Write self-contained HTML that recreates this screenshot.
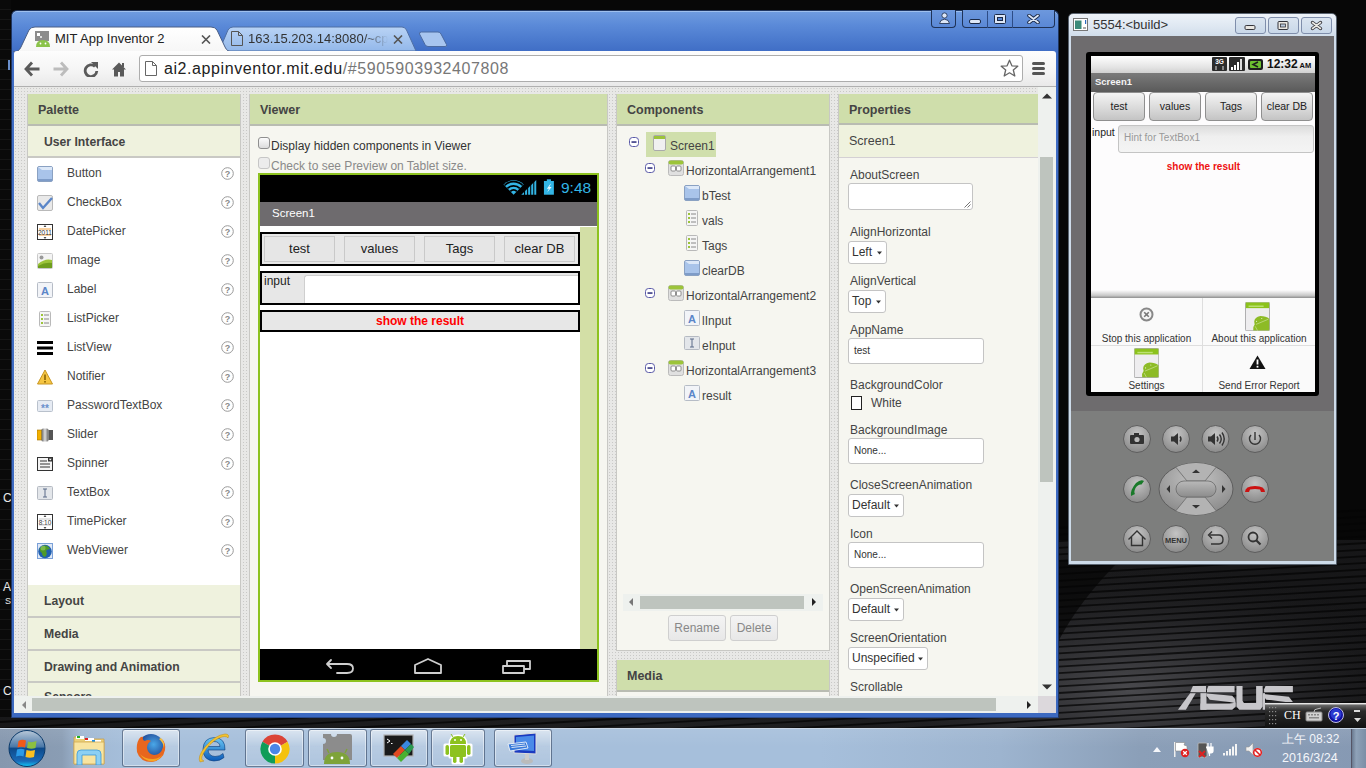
<!DOCTYPE html>
<html><head><meta charset="utf-8">
<style>
*{margin:0;padding:0;box-sizing:border-box}
html,body{width:1366px;height:768px;overflow:hidden}
body{position:relative;background:#0a0a0a;font-family:"Liberation Sans",sans-serif;font-size:13px;color:#333}
.a{position:absolute}
.tb{background:linear-gradient(180deg,#6d98dd,#5a88d6);border:1px solid #1f3358;border-top:none}
.dots{background-color:#e8e8e6;background-image:radial-gradient(circle,#c9c9c7 0.7px,transparent 0.9px);background-size:3px 3px}
.hdr{background:#cfdeab;border-bottom:2px solid #b9bcb2;font-weight:bold;font-size:12.5px;color:#444;padding-left:10px}
.sub{background:#eff2de;border-bottom:2px solid #c9c9c4;font-weight:bold;font-size:12.2px;color:#444}

.pbtn{background:#e6e6e6;border:1px solid #c9c9c9;font-size:13px;line-height:24px;text-align:center;color:#222}
.gbtn{background:linear-gradient(#f4f4f4,#e8e8e8);border:1px solid #cfcfcf;border-radius:3px;font-size:12px;line-height:24px;text-align:center;color:#888}
</style>
<style>
.ebtn{background:linear-gradient(180deg,#dbe5f0,#c9d8e9);border:1px solid #7f8eab;border-radius:3px}
.emb{background:linear-gradient(180deg,#f4f4f4,#d8d8d8 60%,#c4c4c4);border:1px solid #8f8f8f;border-radius:4px;font-size:10.5px;line-height:27px;text-align:center;color:#222}
.etx{font-size:10px;line-height:12px;text-align:center;color:#333;white-space:nowrap}
</style>
<style>
.tbtn{border:1px solid rgba(60,80,110,0.7);border-radius:3px;background:linear-gradient(180deg,rgba(255,255,255,0.55),rgba(255,255,255,0.2) 45%,rgba(255,255,255,0.1));box-shadow:inset 0 0 0 1px rgba(255,255,255,0.45)}
</style>
</head><body>
<div class="a" style="left:0;top:0;width:1366px;height:728px;background:#070707"></div>
<svg class="a" style="left:0;top:0" width="1366" height="728" viewBox="0 0 1366 728">
 <defs>
  <radialGradient id="dg" cx="1130" cy="690" r="300" gradientUnits="userSpaceOnUse" gradientTransform="translate(1130 690) scale(1 0.42) translate(-1130 -690)">
   <stop offset="0" stop-color="#4a4a4e"/><stop offset="0.5" stop-color="#2c2c2f" stop-opacity="0.8"/><stop offset="1" stop-color="#1a1a1c" stop-opacity="0"/>
  </radialGradient>
  <linearGradient id="dg2" x1="0" y1="0" x2="1" y2="0"><stop offset="0" stop-color="#1c1c1e"/><stop offset="0.5" stop-color="#262628"/><stop offset="1" stop-color="#1a1a1c"/></linearGradient>
 </defs>
 <rect x="0" y="540" width="1366" height="188" fill="url(#dg2)" opacity="0.8"/>
 <rect x="800" y="480" width="566" height="248" fill="url(#dg)"/>
 <path d="M1059 560 L1120 560 Q1080 600 1059 640 Z" fill="#060606" opacity="0.7"/>
 <g fill="none" stroke="#050505" stroke-width="1.8" opacity="0.75">
<path d="M0 590.0 Q700 550.0 1366 510.0"/>
<path d="M0 596.6 Q700 556.6 1366 516.6"/>
<path d="M0 603.2 Q700 563.2 1366 523.2"/>
<path d="M0 609.8 Q700 569.8 1366 529.8"/>
<path d="M0 616.4 Q700 576.4 1366 536.4"/>
<path d="M0 623.0 Q700 583.0 1366 543.0"/>
<path d="M0 629.6 Q700 589.6 1366 549.6"/>
<path d="M0 636.2 Q700 596.2 1366 556.2"/>
<path d="M0 642.8 Q700 602.8 1366 562.8"/>
<path d="M0 649.4 Q700 609.4 1366 569.4"/>
<path d="M0 656.0 Q700 616.0 1366 576.0"/>
<path d="M0 662.6 Q700 622.6 1366 582.6"/>
<path d="M0 669.2 Q700 629.2 1366 589.2"/>
<path d="M0 675.8 Q700 635.8 1366 595.8"/>
<path d="M0 682.4 Q700 642.4 1366 602.4"/>
<path d="M0 689.0 Q700 649.0 1366 609.0"/>
<path d="M0 695.6 Q700 655.6 1366 615.6"/>
<path d="M0 702.2 Q700 662.2 1366 622.2"/>
<path d="M0 708.8 Q700 668.8 1366 628.8"/>
<path d="M0 715.4 Q700 675.4 1366 635.4"/>
<path d="M0 722.0 Q700 682.0 1366 642.0"/>
<path d="M0 728.6 Q700 688.6 1366 648.6"/>
<path d="M0 735.2 Q700 695.2 1366 655.2"/>
<path d="M0 741.8 Q700 701.8 1366 661.8"/>
<path d="M0 748.4 Q700 708.4 1366 668.4"/>
<path d="M0 755.0 Q700 715.0 1366 675.0"/>
<path d="M0 761.6 Q700 721.6 1366 681.6"/>
<path d="M0 768.2 Q700 728.2 1366 688.2"/>
<path d="M0 774.8 Q700 734.8 1366 694.8"/>
<path d="M0 781.4 Q700 741.4 1366 701.4"/>
<path d="M0 788.0 Q700 748.0 1366 708.0"/>
<path d="M0 794.6 Q700 754.6 1366 714.6"/>
<path d="M0 801.2 Q700 761.2 1366 721.2"/>
<path d="M0 807.8 Q700 767.8 1366 727.8"/>
<path d="M0 814.4 Q700 774.4 1366 734.4"/>
<path d="M0 821.0 Q700 781.0 1366 741.0"/>
<path d="M0 827.6 Q700 787.6 1366 747.6"/>
<path d="M0 834.2 Q700 794.2 1366 754.2"/>
<path d="M0 840.8 Q700 800.8 1366 760.8"/>
<path d="M0 847.4 Q700 807.4 1366 767.4"/>
 </g>
</svg>
<div class="a" style="left:0;top:0;width:11px;height:717px;background:repeating-linear-gradient(180deg,#0a0a0a 0,#0a0a0a 9px,#161616 9px,#161616 10px)"></div>
<div class="a" style="left:3px;top:491px;font-size:12px;color:#e8e8e8;line-height:14px">C</div>
<div class="a" style="left:3px;top:580px;font-size:12px;color:#e8e8e8;line-height:14px">A</div>
<div class="a" style="left:5px;top:596px;font-size:9px;color:#e8e8e8;line-height:11px">S</div>
<div class="a" style="left:3px;top:684px;font-size:12px;color:#e8e8e8;line-height:14px">C</div>
<div class="a" style="left:8px;top:60px;width:2px;height:10px;background:#6a8fcc"></div>
<!-- ASUS logo -->
<svg class="a" style="left:1176px;top:684px" width="124" height="28" viewBox="0 0 2646 598">
 <g fill="#c7c6ca">
  <path d="M40 550 L210 550 L420 195 L300 195 Z"/>
  <path d="M300 175 L360 45 L640 45 L640 175 Z"/>
  <path d="M660 175 L660 120 L690 45 L1250 45 L1250 175 Z"/>
  <path d="M520 195 L650 195 L650 550 L520 550 Z"/>
  <path d="M650 205 L1200 250 L1260 320 L1275 410 L1140 385 L720 335 L650 250 Z"/>
  <path d="M520 415 L1140 415 L1275 400 L1275 480 L1200 550 L520 550 Z"/>
  <path d="M1290 45 L1420 45 L1420 360 L1450 405 L1710 405 L1710 45 L1850 45 L1850 480 L1800 550 L1350 550 L1290 480 Z"/>
  <path d="M1880 175 L1880 110 L1910 45 L2495 45 L2495 175 Z"/>
  <path d="M1870 215 L2410 270 L2495 385 L2340 385 L1930 335 L1875 270 Z"/>
  <path d="M1850 195 L1900 195 L1900 550 L1850 550 Z"/>
 </g>
</svg>
<!-- language bar -->
<div class="a" style="left:1265px;top:703px;width:101px;height:25px;background:linear-gradient(180deg,#f4f4f4 0,#d8d8d8 1px,#6a6a6a 2px,#2a2a2a 8px,#111 100%)"></div>
<svg class="a" style="left:1268px;top:706px" width="10" height="20" viewBox="0 0 10 20"><g fill="#8a8a8a"><rect x="1" y="1" width="1.2" height="1.2"/><rect x="4" y="1" width="1.2" height="1.2"/><rect x="7" y="1" width="1.2" height="1.2"/><rect x="1" y="5" width="1.2" height="1.2"/><rect x="4" y="5" width="1.2" height="1.2"/><rect x="7" y="5" width="1.2" height="1.2"/><rect x="1" y="9" width="1.2" height="1.2"/><rect x="4" y="9" width="1.2" height="1.2"/><rect x="7" y="9" width="1.2" height="1.2"/><rect x="1" y="13" width="1.2" height="1.2"/><rect x="4" y="13" width="1.2" height="1.2"/><rect x="7" y="13" width="1.2" height="1.2"/><rect x="1" y="17" width="1.2" height="1.2"/><rect x="4" y="17" width="1.2" height="1.2"/><rect x="7" y="17" width="1.2" height="1.2"/></g></svg>
<div class="a" style="left:1284px;top:708px;font-family:'Liberation Serif',serif;font-size:12px;line-height:14px;color:#fff">CH</div>
<svg class="a" style="left:1305px;top:707px" width="18" height="15" viewBox="0 0 18 15"><rect x="1" y="5" width="16" height="9" rx="1" fill="#d0d0d0" stroke="#888"/><g fill="#888"><rect x="3" y="7" width="2" height="1.5"/><rect x="6" y="7" width="2" height="1.5"/><rect x="9" y="7" width="2" height="1.5"/><rect x="12" y="7" width="2" height="1.5"/><rect x="4" y="10" width="10" height="1.5"/></g><path d="M9 5 Q9 2 12 2 L16 1" fill="none" stroke="#bbb"/></svg>
<svg class="a" style="left:1328px;top:707px" width="16" height="16" viewBox="0 0 16 16"><circle cx="8" cy="8" r="7.5" fill="#1010a0" stroke="#c0c0e0" stroke-width="1"/><circle cx="8" cy="7" r="5.5" fill="#2a3ad0"/><text x="8" y="12.5" font-size="11" font-weight="bold" text-anchor="middle" fill="#fff" font-family="Liberation Sans">?</text></svg>
<div class="a" style="left:1354px;top:710px;width:6px;height:2px;background:#ddd"></div>
<svg class="a" style="left:1354px;top:718px" width="7" height="4" viewBox="0 0 7 4"><path d="M0 0 L7 0 L3.5 4 Z" fill="#ddd"/></svg>
<!-- chrome window frame -->
<div class="a" style="left:11px;top:10px;width:1048px;height:708px;background:linear-gradient(180deg,#709ce0 0px,#5b8ad8 14px,#4a79cd 30px,#3f6dc5 41px,#3c69c0 100%);border:1px solid #1f3560;border-bottom-color:#2a4a8a;border-radius:6px 6px 0 0;box-shadow:inset 0 1px 0 #9fc0ee"></div>
<!-- title buttons -->
<div class="a tb" style="left:931px;top:10px;width:25px;height:18px;border-radius:0 0 4px 4px"><svg width="25" height="18" viewBox="0 0 25 18"><circle cx="12.5" cy="5.5" r="2.6" fill="#dde7f7" stroke="#1b2a48" stroke-width="0.8"/><path d="M7.5 13.5 Q8 9.5 12.5 9.2 Q17 9.5 17.5 13.5 Z" fill="#dde7f7" stroke="#1b2a48" stroke-width="0.8"/></svg></div>
<div class="a tb" style="left:962px;top:10px;width:93px;height:18px;border-radius:0 0 4px 4px"></div>
<div class="a" style="left:987px;top:11px;width:1px;height:17px;background:#2d4c86"></div>
<div class="a" style="left:1012px;top:11px;width:1px;height:17px;background:#2d4c86"></div>
<div class="a" style="left:969px;top:19px;width:12px;height:5px;background:#dde7f7;border:1px solid #1b2a48;border-radius:2px"></div>
<svg class="a" style="left:994px;top:14px" width="12" height="10" viewBox="0 0 12 10"><rect x="0.5" y="0.5" width="11" height="9" rx="1" fill="#dde7f7" stroke="#1b2a48"/><rect x="3.5" y="3.5" width="5" height="3" fill="#5a88d6" stroke="#1b2a48"/></svg>
<svg class="a" style="left:1027px;top:14px" width="13" height="10" viewBox="0 0 13 10"><path d="M2 1.5 L11 8.5 M11 1.5 L2 8.5" stroke="#1b2a48" stroke-width="3.6" stroke-linecap="round"/><path d="M2 1.5 L11 8.5 M11 1.5 L2 8.5" stroke="#dde7f7" stroke-width="1.8" stroke-linecap="round"/></svg>
<!-- tabs -->
<svg class="a" style="left:11px;top:25px" width="440" height="27" viewBox="0 0 440 27">
 <defs>
  <linearGradient id="tg2" x1="0" y1="0" x2="0" y2="1"><stop offset="0" stop-color="#b9d3f5"/><stop offset="1" stop-color="#93b8ea"/></linearGradient>
  <linearGradient id="tg1" x1="0" y1="0" x2="0" y2="1"><stop offset="0" stop-color="#ffffff"/><stop offset="1" stop-color="#f6f6f6"/></linearGradient>
 </defs>
 <path d="M208 26 L217 5 Q218.5 2 222 2 L391 2 Q394 2 395.5 5 L405 26 Z" fill="url(#tg2)" stroke="#4f6fa4" stroke-width="1"/>
 <path d="M408.5 9 Q408 7 410.5 7 L427 7 Q429 7 430 9 L435.5 19.5 Q436.5 21.5 434 21.5 L417 21.5 Q415 21.5 414 19.5 Z" fill="#a7c5ef" stroke="#4b6aa0" stroke-width="1"/>
 <path d="M2 27 Q8 27 10 22 L18 5 Q20 2 24 2 L200 2 Q204 2 206 5 L214 22 Q216 27 222 27 Z" fill="url(#tg1)" stroke="#4a5f86" stroke-width="1"/>
</svg>
<!-- favicon -->
<svg class="a" style="left:35px;top:31px" width="16" height="16" viewBox="0 0 16 16"><rect x="0" y="0" width="14" height="10" fill="#8c8c8c"/><rect x="2" y="2" width="3" height="3" fill="#fff"/><rect x="5" y="5" width="2" height="2" fill="#ddd"/><path d="M1 16 Q1 9 8 9 Q15 9 15 16 Z" fill="#8bc34a"/><circle cx="5.5" cy="12.5" r="0.9" fill="#fff"/><circle cx="10.5" cy="12.5" r="0.9" fill="#fff"/></svg>
<div class="a" style="left:55px;top:30px;font-size:13px;color:#222;line-height:17px;white-space:nowrap">MIT App Inventor 2</div>
<svg class="a" style="left:201px;top:35px" width="10" height="9" viewBox="0 0 10 9"><path d="M1 0.5 L9 8.5 M9 0.5 L1 8.5" stroke="#555" stroke-width="1.6"/></svg>
<svg class="a" style="left:231px;top:31px" width="12" height="15" viewBox="0 0 12 15"><path d="M0.5 0.5 L7.5 0.5 L11.5 4.5 L11.5 14.5 L0.5 14.5 Z M7.5 0.5 L7.5 4.5 L11.5 4.5" fill="none" stroke="#555" stroke-width="1"/></svg>
<div class="a" style="left:248px;top:30px;width:140px;overflow:hidden;font-size:13px;color:#333;line-height:17px;white-space:nowrap;-webkit-mask-image:linear-gradient(90deg,#000 82%,transparent)">163.15.203.14:8080/~cpt</div>
<svg class="a" style="left:393px;top:35px" width="10" height="9" viewBox="0 0 10 9"><path d="M1 0.5 L9 8.5 M9 0.5 L1 8.5" stroke="#555" stroke-width="1.6"/></svg>
<!-- toolbar -->
<div class="a" style="left:14px;top:51px;width:1042px;height:36px;background:linear-gradient(180deg,#fdfdfd 0,#f4f4f4 60%,#e9e9e9 100%);border-radius:3px 3px 0 0;border-bottom:1px solid #a8a8a8"></div>
<svg class="a" style="left:24px;top:61px" width="110" height="16" viewBox="0 0 110 16">
 <path d="M8 1.5 L2 8 L8 14.5 M2.5 8 L15.5 8" fill="none" stroke="#5a5a5a" stroke-width="2.8" stroke-linejoin="miter"/>
 <path d="M37 1.5 L43 8 L37 14.5 M42.5 8 L29.5 8" fill="none" stroke="#bcbcbc" stroke-width="2.8"/>
 <path d="M71 5.5 A5.8 5.8 0 1 0 72.8 10" fill="none" stroke="#5a5a5a" stroke-width="2.8"/><path d="M67 1 L74 1 L74 8 Z" fill="#5a5a5a"/>
 <path d="M88 8.5 L95 1.5 L102 8.5 L100 8.5 L100 15.5 L90 15.5 L90 8.5 Z" fill="#5a5a5a"/><rect x="98" y="2" width="2" height="4" fill="#5a5a5a"/><rect x="94" y="11" width="2" height="5" fill="#f4f4f4"/>
</svg>
<div class="a" style="left:139px;top:55px;width:884px;height:27px;background:#fff;border:1px solid #adadad;border-radius:3px"></div>
<svg class="a" style="left:145px;top:61px" width="12" height="15" viewBox="0 0 12 15"><path d="M0.5 0.5 L7.5 0.5 L11.5 4.5 L11.5 14.5 L0.5 14.5 Z M7.5 0.5 L7.5 4.5 L11.5 4.5" fill="#fff" stroke="#666" stroke-width="1"/></svg>
<div class="a" style="left:164px;top:59px;font-size:16px;line-height:19px;letter-spacing:0.58px;color:#222;white-space:nowrap">ai2.appinventor.mit.edu<span style="color:#777">/#5905903932407808</span></div>
<svg class="a" style="left:1000px;top:59px" width="19" height="19" viewBox="0 0 19 19"><path d="M9.5 1.2 L11.9 6.8 L17.8 7.2 L13.3 11 L14.8 17 L9.5 13.8 L4.2 17 L5.7 11 L1.2 7.2 L7.1 6.8 Z" fill="#fff" stroke="#666" stroke-width="1.3" stroke-linejoin="round"/></svg>
<div class="a" style="left:1032px;top:62px;width:13px;height:3px;background:#555;border-radius:2px"></div>
<div class="a" style="left:1032px;top:67px;width:13px;height:3px;background:#555;border-radius:2px"></div>
<div class="a" style="left:1032px;top:72px;width:13px;height:3px;background:#555;border-radius:2px"></div>
<!-- page bg -->
<div class="a dots" style="left:14px;top:87px;width:1024px;height:609px"></div>
<div class="a" style="left:14px;top:86px;width:1042px;height:1px;background:#b0b0b0"></div>
<!-- PALETTE -->
<div class="a" style="left:27px;top:94px;width:214px;height:602px;background:#eff2de;border-left:1px solid #c8c8c4;border-right:1px solid #c8c8c4"></div>
<div class="a hdr" style="left:28px;top:94px;width:212px;height:32px;line-height:32px">Palette</div>
<div class="a sub" style="left:28px;top:126px;width:212px;height:32px;line-height:32px;padding-left:16px">User Interface</div>
<div class="a" style="left:28px;top:158px;width:212px;height:427px;background:#fff"></div>
<div id="plist" class="a" style="left:28px;top:158px;width:212px;height:427px"></div>
<div class="a sub" style="left:28px;top:585px;width:212px;height:33px;line-height:33px;padding-left:16px">Layout</div>
<div class="a sub" style="left:28px;top:618px;width:212px;height:33px;line-height:33px;padding-left:16px">Media</div>
<div class="a sub" style="left:28px;top:651px;width:212px;height:32px;line-height:32px;padding-left:16px">Drawing and Animation</div>
<div class="a sub" style="left:28px;top:683px;width:212px;height:13px;line-height:28px;padding-left:16px;border:none;overflow:hidden">Sensors</div>
<!-- VIEWER -->
<div class="a" style="left:249px;top:94px;width:359px;height:602px;background:#f6f6f0;border-left:1px solid #c8c8c4;border-right:1px solid #c8c8c4"></div>
<div class="a hdr" style="left:250px;top:94px;width:357px;height:32px;line-height:32px">Viewer</div>
<div class="a" style="left:258px;top:137px;width:12px;height:12px;border:1px solid #8f8f8f;border-radius:3px;background:linear-gradient(#fcfcfc,#dcdcdc)"></div>
<div class="a" style="left:271px;top:139px;font-size:12px;line-height:15px;color:#333;white-space:nowrap">Display hidden components in Viewer</div>
<div class="a" style="left:258px;top:157px;width:12px;height:12px;border:1px solid #c6c6c6;border-radius:3px;background:#ececec"></div>
<div class="a" style="left:271px;top:159px;font-size:12px;line-height:15px;color:#8a8a8a;white-space:nowrap">Check to see Preview on Tablet size.</div>
<!-- phone mock -->
<div class="a" style="left:258px;top:173px;width:341px;height:509px;background:#fff;border:2px solid #8dc21f"></div>
<div class="a" style="left:260px;top:175px;width:337px;height:27px;background:#000"></div>
<svg class="a" style="left:500px;top:176px" width="100" height="22" viewBox="0 0 1366 301">
 <path d="M185 255 L47 117 A195 195 0 0 1 323 117 Z" fill="#33b5e5"/>
 <g fill="none" stroke="#000" stroke-width="24">
  <path d="M60 130 A177 177 0 0 1 310 130"/>
  <path d="M100 170 A120 120 0 0 1 270 170"/>
  <path d="M140 210 A64 64 0 0 1 230 210"/>
 </g>
 <path d="M290 255 L495 55 L495 255 Z" fill="#33b5e5"/>
 <g fill="#000"><rect x="328" y="40" width="14" height="220"/><rect x="370" y="40" width="14" height="220"/><rect x="412" y="40" width="14" height="220"/><rect x="454" y="40" width="14" height="220"/></g>
 <rect x="600" y="68" width="136" height="188" fill="#33b5e5"/><rect x="640" y="45" width="56" height="25" fill="#33b5e5"/>
 <path d="M690 105 L640 175 L668 175 L645 225 L705 150 L675 150 L695 105 Z" fill="#e8f6fc"/>
</svg>
<div class="a" style="left:561px;top:179px;font-size:15.5px;line-height:17px;color:#33b5e5;white-space:nowrap">9:48</div>
<div class="a" style="left:260px;top:202px;width:337px;height:24px;background:#6e6b6e"></div>
<div class="a" style="left:272px;top:205px;font-size:11.5px;font-weight:normal;line-height:16px;color:#fff;white-space:nowrap">Screen1</div>
<div class="a" style="left:580px;top:227px;width:17px;height:422px;background:#d3dfa6"></div>
<!-- HA1 -->
<div class="a" style="left:260px;top:232px;width:320px;height:34px;background:#e7e7e7;border:2px solid #000"></div>
<div class="a pbtn" style="left:264px;top:236px;width:71px;height:26px">test</div>
<div class="a pbtn" style="left:344px;top:236px;width:71px;height:26px">values</div>
<div class="a pbtn" style="left:424px;top:236px;width:71px;height:26px">Tags</div>
<div class="a pbtn" style="left:504px;top:236px;width:71px;height:26px">clear DB</div>
<!-- HA2 -->
<div class="a" style="left:260px;top:271px;width:320px;height:34px;background:#e7e7e7;border:2px solid #000"></div>
<div class="a" style="left:264px;top:274px;font-size:12px;line-height:15px;color:#222">input</div>
<div class="a" style="left:304px;top:275px;width:274px;height:28px;background:#fff;border-left:1px solid #cfcfcf;border-top:1px solid #cfcfcf;border-radius:3px 0 0 0"></div>
<!-- HA3 -->
<div class="a" style="left:260px;top:310px;width:320px;height:22px;background:#e7e7e7;border:2px solid #000"></div>
<div class="a" style="left:262px;top:312px;width:316px;height:18px;line-height:18px;text-align:center;font-size:12px;font-weight:bold;color:#ff0000">show the result</div>
<div class="a" style="left:260px;top:649px;width:337px;height:31px;background:#000"></div>
<svg class="a" style="left:325px;top:657px" width="210" height="18" viewBox="0 0 210 18">
 <path d="M6 3 L2 7 L6 11 M2.5 7 L22 7 Q28 7 28 11.5 Q28 16 22 16 L12 16" fill="none" stroke="#cfcfcf" stroke-width="1.8" stroke-linecap="round" stroke-linejoin="round"/>
 <path d="M90 8 L103 2 L116 8 L116 16 L90 16 Z" fill="none" stroke="#cfcfcf" stroke-width="1.8" stroke-linejoin="round"/>
 <path d="M178 9 L178 16 L199 16 L199 9 Z M182 8 L182 4 L205 4 L205 12 L199 12" fill="none" stroke="#cfcfcf" stroke-width="1.8" stroke-linejoin="round"/>
</svg>
<!-- COMPONENTS -->
<div class="a" style="left:616px;top:94px;width:214px;height:557px;background:#f6f6f0;border:1px solid #c8c8c4;border-top:none"></div>
<div class="a hdr" style="left:617px;top:94px;width:212px;height:32px;line-height:32px">Components</div>
<div id="ctree"></div>
<!-- comp horizontal scrollbar -->
<div class="a" style="left:623px;top:594px;width:200px;height:17px;background:#eef1ee"></div>
<div class="a" style="left:640px;top:596px;width:164px;height:13px;background:#bec4be"></div>
<svg class="a" style="left:627px;top:597px" width="195" height="10" viewBox="0 0 195 10"><path d="M6 1 L2 5 L6 9 Z" fill="#777"/><path d="M185 1 L189 5 L185 9 Z" fill="#222"/></svg>
<div class="a gbtn" style="left:668px;top:615px;width:58px;height:26px">Rename</div>
<div class="a gbtn" style="left:730px;top:615px;width:48px;height:26px">Delete</div>
<div class="a" style="left:616px;top:660px;width:214px;height:36px;background:#f6f6f0;border-left:1px solid #c8c8c4;border-right:1px solid #c8c8c4"></div>
<div class="a hdr" style="left:617px;top:660px;width:212px;height:32px;line-height:32px">Media</div>
<!-- PROPERTIES -->
<div class="a" style="left:838px;top:94px;width:201px;height:602px;background:#f6f6f0;border-left:1px solid #c8c8c4"></div>
<div class="a hdr" style="left:839px;top:94px;width:199px;height:31px;line-height:32px">Properties</div>
<div class="a" style="left:839px;top:125px;width:199px;height:33px;background:#eff2de;border-bottom:1px solid #d4d0d4;font-size:12.5px;color:#444;padding-left:10px;line-height:32px">Screen1</div>
<div id="props"></div>
<svg class="a" style="left:37px;top:166px" width="16" height="16" viewBox="0 0 16 16"><rect x="0.5" y="0.5" width="15" height="15" rx="1.5" fill="#a9c4ea" stroke="#8aa1c2"/><path d="M1 1 L15 1 L15 4 L5 4 Z" fill="#dce8f8"/><rect x="1" y="13" width="14" height="2" fill="#7e9cc8"/></svg>
<div class="a" style="left:67px;top:166px;font-size:12px;line-height:15px;color:#444;white-space:nowrap">Button</div>
<svg class="a" style="left:221px;top:167px" width="13" height="13" viewBox="0 0 13 13"><circle cx="6.5" cy="6.5" r="5.8" fill="#fff" stroke="#9a9a9a" stroke-width="1"/><text x="6.5" y="10" font-size="9" font-weight="bold" text-anchor="middle" fill="#888" font-family="Liberation Sans">?</text></svg>
<svg class="a" style="left:37px;top:195px" width="16" height="16" viewBox="0 0 16 16"><rect x="0.5" y="0.5" width="15" height="15" rx="1.5" fill="#e9e9e9" stroke="#b9b9b9"/><path d="M2 8 L6 13 L15 3" fill="none" stroke="#5b86c8" stroke-width="2.4"/></svg>
<div class="a" style="left:67px;top:195px;font-size:12px;line-height:15px;color:#444;white-space:nowrap">CheckBox</div>
<svg class="a" style="left:221px;top:196px" width="13" height="13" viewBox="0 0 13 13"><circle cx="6.5" cy="6.5" r="5.8" fill="#fff" stroke="#9a9a9a" stroke-width="1"/><text x="6.5" y="10" font-size="9" font-weight="bold" text-anchor="middle" fill="#888" font-family="Liberation Sans">?</text></svg>
<svg class="a" style="left:37px;top:224px" width="16" height="16" viewBox="0 0 16 16"><rect x="0.5" y="0.5" width="15" height="15" fill="#fff" stroke="#333"/><path d="M2 5 L14 5 M2 11 L14 11" stroke="#f0a040" stroke-width="1"/><text x="8" y="10.5" font-size="6.5" text-anchor="middle" fill="#333" font-family="Liberation Sans">2011</text><path d="M7 3 L8 1.5 L9 3 M7 13 L8 14.5 L9 13" fill="#333" stroke="#333" stroke-width="0.6"/></svg>
<div class="a" style="left:67px;top:224px;font-size:12px;line-height:15px;color:#444;white-space:nowrap">DatePicker</div>
<svg class="a" style="left:221px;top:225px" width="13" height="13" viewBox="0 0 13 13"><circle cx="6.5" cy="6.5" r="5.8" fill="#fff" stroke="#9a9a9a" stroke-width="1"/><text x="6.5" y="10" font-size="9" font-weight="bold" text-anchor="middle" fill="#888" font-family="Liberation Sans">?</text></svg>
<svg class="a" style="left:37px;top:253px" width="16" height="16" viewBox="0 0 16 16"><rect x="0.5" y="0.5" width="15" height="15" rx="1" fill="#f4f4f4" stroke="#c9c9c9"/><circle cx="4.5" cy="4.5" r="2" fill="#999"/><path d="M1 11 Q8 5 15 7 L15 15 L1 15 Z" fill="#9cc43a"/><path d="M1 13 Q8 9 15 10 L15 15 L1 15 Z" fill="#6f9e1e"/></svg>
<div class="a" style="left:67px;top:253px;font-size:12px;line-height:15px;color:#444;white-space:nowrap">Image</div>
<svg class="a" style="left:221px;top:254px" width="13" height="13" viewBox="0 0 13 13"><circle cx="6.5" cy="6.5" r="5.8" fill="#fff" stroke="#9a9a9a" stroke-width="1"/><text x="6.5" y="10" font-size="9" font-weight="bold" text-anchor="middle" fill="#888" font-family="Liberation Sans">?</text></svg>
<svg class="a" style="left:37px;top:282px" width="16" height="16" viewBox="0 0 16 16"><rect x="0.5" y="0.5" width="15" height="15" rx="1" fill="#f2f4f8" stroke="#b6bcc6"/><text x="8" y="12.5" font-size="11" font-weight="bold" text-anchor="middle" fill="#5b86c8" font-family="Liberation Sans">A</text></svg>
<div class="a" style="left:67px;top:282px;font-size:12px;line-height:15px;color:#444;white-space:nowrap">Label</div>
<svg class="a" style="left:221px;top:283px" width="13" height="13" viewBox="0 0 13 13"><circle cx="6.5" cy="6.5" r="5.8" fill="#fff" stroke="#9a9a9a" stroke-width="1"/><text x="6.5" y="10" font-size="9" font-weight="bold" text-anchor="middle" fill="#888" font-family="Liberation Sans">?</text></svg>
<svg class="a" style="left:37px;top:311px" width="16" height="16" viewBox="0 0 16 16"><rect x="2.5" y="0.5" width="11" height="15" rx="1" fill="#f5f5f5" stroke="#b9b9b9"/><rect x="4" y="3" width="2" height="2" fill="#9cc43a"/><rect x="4" y="7" width="2" height="2" fill="#9cc43a"/><rect x="4" y="11" width="2" height="2" fill="#9cc43a"/><path d="M7 4 L12 4 M7 8 L12 8 M7 12 L12 12" stroke="#888" stroke-width="1"/></svg>
<div class="a" style="left:67px;top:311px;font-size:12px;line-height:15px;color:#444;white-space:nowrap">ListPicker</div>
<svg class="a" style="left:221px;top:312px" width="13" height="13" viewBox="0 0 13 13"><circle cx="6.5" cy="6.5" r="5.8" fill="#fff" stroke="#9a9a9a" stroke-width="1"/><text x="6.5" y="10" font-size="9" font-weight="bold" text-anchor="middle" fill="#888" font-family="Liberation Sans">?</text></svg>
<svg class="a" style="left:37px;top:340px" width="16" height="16" viewBox="0 0 16 16"><rect x="0" y="1" width="16" height="3" fill="#000"/><rect x="0" y="6.5" width="16" height="3" fill="#000"/><rect x="0" y="12" width="16" height="3" fill="#000"/></svg>
<div class="a" style="left:67px;top:340px;font-size:12px;line-height:15px;color:#444;white-space:nowrap">ListView</div>
<svg class="a" style="left:221px;top:341px" width="13" height="13" viewBox="0 0 13 13"><circle cx="6.5" cy="6.5" r="5.8" fill="#fff" stroke="#9a9a9a" stroke-width="1"/><text x="6.5" y="10" font-size="9" font-weight="bold" text-anchor="middle" fill="#888" font-family="Liberation Sans">?</text></svg>
<svg class="a" style="left:37px;top:369px" width="16" height="16" viewBox="0 0 16 16"><path d="M8 1 L15.5 15 L0.5 15 Z" fill="#f5c542" stroke="#c89520"/><rect x="7.2" y="5.5" width="1.6" height="5.5" fill="#8a6200"/><rect x="7.2" y="12" width="1.6" height="1.6" fill="#8a6200"/></svg>
<div class="a" style="left:67px;top:369px;font-size:12px;line-height:15px;color:#444;white-space:nowrap">Notifier</div>
<svg class="a" style="left:221px;top:370px" width="13" height="13" viewBox="0 0 13 13"><circle cx="6.5" cy="6.5" r="5.8" fill="#fff" stroke="#9a9a9a" stroke-width="1"/><text x="6.5" y="10" font-size="9" font-weight="bold" text-anchor="middle" fill="#888" font-family="Liberation Sans">?</text></svg>
<svg class="a" style="left:37px;top:398px" width="16" height="16" viewBox="0 0 16 16"><rect x="0.5" y="2.5" width="15" height="11" rx="1" fill="#e6ebf3" stroke="#b9c1cc"/><text x="8" y="13.5" font-size="10" font-weight="bold" text-anchor="middle" fill="#6a90cc" font-family="Liberation Sans">**</text></svg>
<div class="a" style="left:67px;top:398px;font-size:12px;line-height:15px;color:#444;white-space:nowrap">PasswordTextBox</div>
<svg class="a" style="left:221px;top:399px" width="13" height="13" viewBox="0 0 13 13"><circle cx="6.5" cy="6.5" r="5.8" fill="#fff" stroke="#9a9a9a" stroke-width="1"/><text x="6.5" y="10" font-size="9" font-weight="bold" text-anchor="middle" fill="#888" font-family="Liberation Sans">?</text></svg>
<svg class="a" style="left:37px;top:427px" width="16" height="16" viewBox="0 0 16 16"><defs><linearGradient id="sl" x1="0" x2="1"><stop offset="0" stop-color="#666"/><stop offset="0.5" stop-color="#ddd"/><stop offset="1" stop-color="#666"/></linearGradient></defs><rect x="0" y="3" width="5" height="10" fill="#f2b000" stroke="#a07000" stroke-width="0.6"/><rect x="4.5" y="1.5" width="7" height="13" rx="1.5" fill="url(#sl)"/><rect x="11.5" y="3" width="4.5" height="10" fill="#555"/></svg>
<div class="a" style="left:67px;top:427px;font-size:12px;line-height:15px;color:#444;white-space:nowrap">Slider</div>
<svg class="a" style="left:221px;top:428px" width="13" height="13" viewBox="0 0 13 13"><circle cx="6.5" cy="6.5" r="5.8" fill="#fff" stroke="#9a9a9a" stroke-width="1"/><text x="6.5" y="10" font-size="9" font-weight="bold" text-anchor="middle" fill="#888" font-family="Liberation Sans">?</text></svg>
<svg class="a" style="left:37px;top:456px" width="16" height="16" viewBox="0 0 16 16"><rect x="0.5" y="1.5" width="15" height="13" fill="#f4f4f4" stroke="#333"/><path d="M3 5 L10 5 M3 8 L13 8 M3 11 L13 11" stroke="#333" stroke-width="1.2"/><rect x="11" y="1.5" width="4.5" height="4" fill="#333"/><path d="M11.8 2.7 L14.7 2.7 L13.25 4.5 Z" fill="#fff"/></svg>
<div class="a" style="left:67px;top:456px;font-size:12px;line-height:15px;color:#444;white-space:nowrap">Spinner</div>
<svg class="a" style="left:221px;top:457px" width="13" height="13" viewBox="0 0 13 13"><circle cx="6.5" cy="6.5" r="5.8" fill="#fff" stroke="#9a9a9a" stroke-width="1"/><text x="6.5" y="10" font-size="9" font-weight="bold" text-anchor="middle" fill="#888" font-family="Liberation Sans">?</text></svg>
<svg class="a" style="left:37px;top:485px" width="16" height="16" viewBox="0 0 16 16"><rect x="0.5" y="1.5" width="15" height="13" rx="1" fill="#e3e6ea" stroke="#b5bac2"/><path d="M6 4 L10 4 M8 4 L8 12 M6 12 L10 12" stroke="#5b6a88" stroke-width="1"/></svg>
<div class="a" style="left:67px;top:485px;font-size:12px;line-height:15px;color:#444;white-space:nowrap">TextBox</div>
<svg class="a" style="left:221px;top:486px" width="13" height="13" viewBox="0 0 13 13"><circle cx="6.5" cy="6.5" r="5.8" fill="#fff" stroke="#9a9a9a" stroke-width="1"/><text x="6.5" y="10" font-size="9" font-weight="bold" text-anchor="middle" fill="#888" font-family="Liberation Sans">?</text></svg>
<svg class="a" style="left:37px;top:514px" width="16" height="16" viewBox="0 0 16 16"><rect x="0.5" y="0.5" width="15" height="15" fill="#fff" stroke="#333"/><text x="8" y="10.5" font-size="6.5" text-anchor="middle" fill="#333" font-family="Liberation Sans">8:10</text><path d="M7 3 L8 1.5 L9 3 M7 13 L8 14.5 L9 13" fill="#333" stroke="#333" stroke-width="0.6"/><path d="M2 5 L14 5 M2 11 L14 11" stroke="#aaa" stroke-width="0.6"/></svg>
<div class="a" style="left:67px;top:514px;font-size:12px;line-height:15px;color:#444;white-space:nowrap">TimePicker</div>
<svg class="a" style="left:221px;top:515px" width="13" height="13" viewBox="0 0 13 13"><circle cx="6.5" cy="6.5" r="5.8" fill="#fff" stroke="#9a9a9a" stroke-width="1"/><text x="6.5" y="10" font-size="9" font-weight="bold" text-anchor="middle" fill="#888" font-family="Liberation Sans">?</text></svg>
<svg class="a" style="left:37px;top:543px" width="16" height="16" viewBox="0 0 16 16"><rect x="0.5" y="0.5" width="15" height="15" fill="#dfe8f5" stroke="#7aa0d8"/><circle cx="8" cy="8.5" r="6.8" fill="#1f5fb0"/><path d="M2.5 6 Q5 2 9 2.5 Q12 3 13 6 Q10 6 9 8 Q11 11 8 14 Q5 13 5 10 Q3 9 2.5 6 Z" fill="#4e9a2a"/><circle cx="6" cy="5" r="2.5" fill="#9ad060" opacity="0.6"/></svg>
<div class="a" style="left:67px;top:543px;font-size:12px;line-height:15px;color:#444;white-space:nowrap">WebViewer</div>
<svg class="a" style="left:221px;top:544px" width="13" height="13" viewBox="0 0 13 13"><circle cx="6.5" cy="6.5" r="5.8" fill="#fff" stroke="#9a9a9a" stroke-width="1"/><text x="6.5" y="10" font-size="9" font-weight="bold" text-anchor="middle" fill="#888" font-family="Liberation Sans">?</text></svg>
<div class="a" style="left:646px;top:132px;width:70px;height:25px;background:#d0dfac"></div>
<svg class="a" style="left:629px;top:137px" width="10" height="10" viewBox="0 0 10 10"><rect x="0.5" y="0.5" width="9" height="9" rx="3" fill="#fff" stroke="#5a5aa8"/><rect x="2.5" y="4.3" width="5" height="1.5" fill="#2a2a7a"/></svg>
<svg class="a" style="left:652px;top:135px" width="16" height="16" viewBox="0 0 16 16"><rect x="1.5" y="0.5" width="12" height="15" rx="1.5" fill="#f0f0f0" stroke="#aaa"/><rect x="2" y="1" width="11" height="3" fill="#9cc43a"/></svg>
<div class="a" style="left:670px;top:139px;font-size:12px;line-height:15px;color:#444;white-space:nowrap">Screen1</div>
<svg class="a" style="left:645px;top:163px" width="10" height="10" viewBox="0 0 10 10"><rect x="0.5" y="0.5" width="9" height="9" rx="3" fill="#fff" stroke="#5a5aa8"/><rect x="2.5" y="4.3" width="5" height="1.5" fill="#2a2a7a"/></svg>
<svg class="a" style="left:668px;top:160px" width="16" height="16" viewBox="0 0 16 16"><rect x="0.5" y="0.5" width="15" height="15" rx="2" fill="#e0e0e0" stroke="#bbb"/><rect x="0.5" y="0.5" width="15" height="4" rx="2" fill="#9cc43a"/><rect x="3" y="6" width="4.5" height="5" rx="1" fill="#fff" stroke="#777" stroke-width="0.8"/><rect x="8.5" y="6" width="4.5" height="5" rx="1" fill="#fff" stroke="#777" stroke-width="0.8"/></svg>
<div class="a" style="left:686px;top:164px;font-size:12px;line-height:15px;color:#444;white-space:nowrap">HorizontalArrangement1</div>
<svg class="a" style="left:684px;top:185px" width="16" height="16" viewBox="0 0 16 16"><rect x="0.5" y="0.5" width="15" height="15" rx="1.5" fill="#a9c4ea" stroke="#8aa1c2"/><path d="M1 1 L15 1 L15 4 L5 4 Z" fill="#dce8f8"/><rect x="1" y="13" width="14" height="2" fill="#7e9cc8"/></svg>
<div class="a" style="left:702px;top:189px;font-size:12px;line-height:15px;color:#444;white-space:nowrap">bTest</div>
<svg class="a" style="left:684px;top:210px" width="16" height="16" viewBox="0 0 16 16"><rect x="2.5" y="0.5" width="11" height="15" rx="1" fill="#f5f5f5" stroke="#b9b9b9"/><rect x="4" y="3" width="2" height="2" fill="#9cc43a"/><rect x="4" y="7" width="2" height="2" fill="#9cc43a"/><rect x="4" y="11" width="2" height="2" fill="#9cc43a"/><path d="M7 4 L12 4 M7 8 L12 8 M7 12 L12 12" stroke="#888" stroke-width="1"/></svg>
<div class="a" style="left:702px;top:214px;font-size:12px;line-height:15px;color:#444;white-space:nowrap">vals</div>
<svg class="a" style="left:684px;top:235px" width="16" height="16" viewBox="0 0 16 16"><rect x="2.5" y="0.5" width="11" height="15" rx="1" fill="#f5f5f5" stroke="#b9b9b9"/><rect x="4" y="3" width="2" height="2" fill="#9cc43a"/><rect x="4" y="7" width="2" height="2" fill="#9cc43a"/><rect x="4" y="11" width="2" height="2" fill="#9cc43a"/><path d="M7 4 L12 4 M7 8 L12 8 M7 12 L12 12" stroke="#888" stroke-width="1"/></svg>
<div class="a" style="left:702px;top:239px;font-size:12px;line-height:15px;color:#444;white-space:nowrap">Tags</div>
<svg class="a" style="left:684px;top:260px" width="16" height="16" viewBox="0 0 16 16"><rect x="0.5" y="0.5" width="15" height="15" rx="1.5" fill="#a9c4ea" stroke="#8aa1c2"/><path d="M1 1 L15 1 L15 4 L5 4 Z" fill="#dce8f8"/><rect x="1" y="13" width="14" height="2" fill="#7e9cc8"/></svg>
<div class="a" style="left:702px;top:264px;font-size:12px;line-height:15px;color:#444;white-space:nowrap">clearDB</div>
<svg class="a" style="left:645px;top:288px" width="10" height="10" viewBox="0 0 10 10"><rect x="0.5" y="0.5" width="9" height="9" rx="3" fill="#fff" stroke="#5a5aa8"/><rect x="2.5" y="4.3" width="5" height="1.5" fill="#2a2a7a"/></svg>
<svg class="a" style="left:668px;top:285px" width="16" height="16" viewBox="0 0 16 16"><rect x="0.5" y="0.5" width="15" height="15" rx="2" fill="#e0e0e0" stroke="#bbb"/><rect x="0.5" y="0.5" width="15" height="4" rx="2" fill="#9cc43a"/><rect x="3" y="6" width="4.5" height="5" rx="1" fill="#fff" stroke="#777" stroke-width="0.8"/><rect x="8.5" y="6" width="4.5" height="5" rx="1" fill="#fff" stroke="#777" stroke-width="0.8"/></svg>
<div class="a" style="left:686px;top:289px;font-size:12px;line-height:15px;color:#444;white-space:nowrap">HorizontalArrangement2</div>
<svg class="a" style="left:684px;top:310px" width="16" height="16" viewBox="0 0 16 16"><rect x="0.5" y="0.5" width="15" height="15" rx="1" fill="#f2f4f8" stroke="#b6bcc6"/><text x="8" y="12.5" font-size="11" font-weight="bold" text-anchor="middle" fill="#5b86c8" font-family="Liberation Sans">A</text></svg>
<div class="a" style="left:702px;top:314px;font-size:12px;line-height:15px;color:#444;white-space:nowrap">lInput</div>
<svg class="a" style="left:684px;top:335px" width="16" height="16" viewBox="0 0 16 16"><rect x="0.5" y="1.5" width="15" height="13" rx="1" fill="#e3e6ea" stroke="#b5bac2"/><path d="M6 4 L10 4 M8 4 L8 12 M6 12 L10 12" stroke="#5b6a88" stroke-width="1"/></svg>
<div class="a" style="left:702px;top:339px;font-size:12px;line-height:15px;color:#444;white-space:nowrap">eInput</div>
<svg class="a" style="left:645px;top:363px" width="10" height="10" viewBox="0 0 10 10"><rect x="0.5" y="0.5" width="9" height="9" rx="3" fill="#fff" stroke="#5a5aa8"/><rect x="2.5" y="4.3" width="5" height="1.5" fill="#2a2a7a"/></svg>
<svg class="a" style="left:668px;top:360px" width="16" height="16" viewBox="0 0 16 16"><rect x="0.5" y="0.5" width="15" height="15" rx="2" fill="#e0e0e0" stroke="#bbb"/><rect x="0.5" y="0.5" width="15" height="4" rx="2" fill="#9cc43a"/><rect x="3" y="6" width="4.5" height="5" rx="1" fill="#fff" stroke="#777" stroke-width="0.8"/><rect x="8.5" y="6" width="4.5" height="5" rx="1" fill="#fff" stroke="#777" stroke-width="0.8"/></svg>
<div class="a" style="left:686px;top:364px;font-size:12px;line-height:15px;color:#444;white-space:nowrap">HorizontalArrangement3</div>
<svg class="a" style="left:684px;top:385px" width="16" height="16" viewBox="0 0 16 16"><rect x="0.5" y="0.5" width="15" height="15" rx="1" fill="#f2f4f8" stroke="#b6bcc6"/><text x="8" y="12.5" font-size="11" font-weight="bold" text-anchor="middle" fill="#5b86c8" font-family="Liberation Sans">A</text></svg>
<div class="a" style="left:702px;top:389px;font-size:12px;line-height:15px;color:#444;white-space:nowrap">result</div>
<div class="a" style="left:850px;top:168px;font-size:12px;line-height:15px;color:#444;white-space:nowrap">AboutScreen</div>
<div class="a" style="left:848px;top:183px;width:125px;height:27px;background:#fff;border:1px solid #c4c4c4;border-radius:3px;font-size:10px;color:#333;padding-left:5px;line-height:25px"></div><svg class="a" style="left:964px;top:201px" width="7" height="7" viewBox="0 0 7 7"><path d="M6.5 0.5 L0.5 6.5 M6.5 3.5 L3.5 6.5" stroke="#666" stroke-width="0.9"/></svg>
<div class="a" style="left:850px;top:225px;font-size:12px;line-height:15px;color:#444;white-space:nowrap">AlignHorizontal</div>
<div class="a" style="left:848px;top:241px;width:39px;height:23px;background:#fff;border:1px solid #c4c4c4;border-radius:3px;font-size:12px;color:#333;padding-left:3px;line-height:21px;white-space:nowrap">Left<svg style="position:absolute;right:4px;top:9px" width="5" height="4" viewBox="0 0 5 4"><path d="M0 0.5 L5 0.5 L2.5 3.5 Z" fill="#333"/></svg></div>
<div class="a" style="left:850px;top:274px;font-size:12px;line-height:15px;color:#444;white-space:nowrap">AlignVertical</div>
<div class="a" style="left:848px;top:290px;width:38px;height:23px;background:#fff;border:1px solid #c4c4c4;border-radius:3px;font-size:12px;color:#333;padding-left:3px;line-height:21px;white-space:nowrap">Top<svg style="position:absolute;right:4px;top:9px" width="5" height="4" viewBox="0 0 5 4"><path d="M0 0.5 L5 0.5 L2.5 3.5 Z" fill="#333"/></svg></div>
<div class="a" style="left:850px;top:323px;font-size:12px;line-height:15px;color:#444;white-space:nowrap">AppName</div>
<div class="a" style="left:848px;top:338px;width:136px;height:26px;background:#fff;border:1px solid #c4c4c4;border-radius:3px;font-size:10px;color:#333;padding-left:5px;line-height:24px">test</div>
<div class="a" style="left:850px;top:378px;font-size:12px;line-height:15px;color:#444;white-space:nowrap">BackgroundColor</div>
<div class="a" style="left:851px;top:396px;width:11px;height:14px;background:#fff;border:1px solid #222"></div>
<div class="a" style="left:871px;top:396px;font-size:12px;line-height:15px;color:#444">White</div>
<div class="a" style="left:850px;top:423px;font-size:12px;line-height:15px;color:#444;white-space:nowrap">BackgroundImage</div>
<div class="a" style="left:848px;top:438px;width:136px;height:26px;background:#fff;border:1px solid #c4c4c4;border-radius:3px;font-size:10px;color:#333;padding-left:5px;line-height:24px">None...</div>
<div class="a" style="left:850px;top:478px;font-size:12px;line-height:15px;color:#444;white-space:nowrap">CloseScreenAnimation</div>
<div class="a" style="left:848px;top:494px;width:56px;height:23px;background:#fff;border:1px solid #c4c4c4;border-radius:3px;font-size:12px;color:#333;padding-left:3px;line-height:21px;white-space:nowrap">Default<svg style="position:absolute;right:4px;top:9px" width="5" height="4" viewBox="0 0 5 4"><path d="M0 0.5 L5 0.5 L2.5 3.5 Z" fill="#333"/></svg></div>
<div class="a" style="left:850px;top:527px;font-size:12px;line-height:15px;color:#444;white-space:nowrap">Icon</div>
<div class="a" style="left:848px;top:542px;width:136px;height:26px;background:#fff;border:1px solid #c4c4c4;border-radius:3px;font-size:10px;color:#333;padding-left:5px;line-height:24px">None...</div>
<div class="a" style="left:850px;top:582px;font-size:12px;line-height:15px;color:#444;white-space:nowrap">OpenScreenAnimation</div>
<div class="a" style="left:848px;top:598px;width:56px;height:23px;background:#fff;border:1px solid #c4c4c4;border-radius:3px;font-size:12px;color:#333;padding-left:3px;line-height:21px;white-space:nowrap">Default<svg style="position:absolute;right:4px;top:9px" width="5" height="4" viewBox="0 0 5 4"><path d="M0 0.5 L5 0.5 L2.5 3.5 Z" fill="#333"/></svg></div>
<div class="a" style="left:850px;top:631px;font-size:12px;line-height:15px;color:#444;white-space:nowrap">ScreenOrientation</div>
<div class="a" style="left:848px;top:647px;width:80px;height:23px;background:#fff;border:1px solid #c4c4c4;border-radius:3px;font-size:12px;color:#333;padding-left:3px;line-height:21px;white-space:nowrap">Unspecified<svg style="position:absolute;right:4px;top:9px" width="5" height="4" viewBox="0 0 5 4"><path d="M0 0.5 L5 0.5 L2.5 3.5 Z" fill="#333"/></svg></div>
<div class="a" style="left:850px;top:680px;font-size:12px;line-height:15px;color:#444;white-space:nowrap">Scrollable</div><!-- page scrollbars -->
<div class="a" style="left:1038px;top:87px;width:18px;height:609px;background:#eef1ee"></div>
<div class="a" style="left:1040px;top:157px;width:13px;height:325px;background:#bec4be"></div>
<svg class="a" style="left:1042px;top:93px" width="10" height="6" viewBox="0 0 10 6"><path d="M0 5.5 L5 0.5 L10 5.5 Z" fill="#333"/></svg>
<svg class="a" style="left:1042px;top:684px" width="10" height="6" viewBox="0 0 10 6"><path d="M0 0.5 L5 5.5 L10 0.5 Z" fill="#333"/></svg>
<div class="a" style="left:14px;top:696px;width:1024px;height:17px;background:#eef1ee"></div>
<div class="a" style="left:32px;top:698px;width:964px;height:13px;background:#bec4be"></div>
<svg class="a" style="left:20px;top:700px" width="1015" height="10" viewBox="0 0 1015 10"><path d="M6 1 L2 5 L6 9 Z" fill="#888"/><path d="M1007 1 L1011 5 L1007 9 Z" fill="#222"/></svg>
<div class="a" style="left:1038px;top:696px;width:18px;height:17px;background:#dcd8dc"></div>
<!-- EMULATOR WINDOW -->
<div class="a" style="left:1068px;top:13px;width:269px;height:552px;background:linear-gradient(180deg,#eef3f9 0,#dfe8f2 12px,#cfdcea 23px,#cddbe9 100%);border:1px solid #5a6470;border-radius:5px 5px 0 0"></div>
<svg class="a" style="left:1073px;top:18px" width="15" height="13" viewBox="0 0 15 13"><rect x="0.5" y="0.5" width="14" height="12" fill="#fff" stroke="#777"/><rect x="2" y="2.5" width="6.5" height="8.5" fill="#3a8a7a"/><rect x="12" y="2" width="1.2" height="4" fill="#2a6ac0"/><rect x="10" y="9" width="3" height="2" fill="#aaa"/></svg>
<div class="a" style="left:1093px;top:17px;font-size:13px;line-height:16px;color:#333;white-space:nowrap">5554:&lt;build&gt;</div>
<div class="a ebtn" style="left:1235px;top:17px;width:31px;height:17px"></div>
<div class="a ebtn" style="left:1268px;top:17px;width:31px;height:17px"></div>
<div class="a ebtn" style="left:1301px;top:17px;width:31px;height:17px"></div>
<svg class="a" style="left:1244px;top:20px" width="80" height="11" viewBox="0 0 80 11">
 <rect x="1" y="5.5" width="10" height="4" rx="1.2" fill="#e9e7e2" stroke="#33333a" stroke-width="1"/>
 <rect x="34" y="1.5" width="10" height="8" rx="1" fill="#e9e7e2" stroke="#33333a" stroke-width="1"/><rect x="36.5" y="4" width="5" height="3" fill="#b8c8dc" stroke="#33333a" stroke-width="0.8"/>
 <path d="M68.5 2.5 L76.5 8.5 M76.5 2.5 L68.5 8.5" stroke="#33333a" stroke-width="3.4" stroke-linecap="round"/><path d="M68.5 2.5 L76.5 8.5 M76.5 2.5 L68.5 8.5" stroke="#ecebe6" stroke-width="1.6" stroke-linecap="round"/>
</svg>
<div class="a" style="left:1071px;top:36px;width:263px;height:375px;background:#6e6c6e"></div>
<div class="a" style="left:1071px;top:411px;width:263px;height:150px;background:#7d7e7d"></div>
<!-- phone bezel -->
<div class="a" style="left:1086px;top:52px;width:233px;height:344px;background:#000;border-radius:3px"></div>
<div class="a" style="left:1091px;top:56px;width:224px;height:336px;background:#fdfcfd"></div>
<div class="a" style="left:1091px;top:56px;width:224px;height:17px;background:linear-gradient(180deg,#ffffff,#e2e2e2 70%,#d0d0d0)"></div>
<svg class="a" style="left:1212px;top:57px" width="52" height="15" viewBox="0 0 52 15">
 <rect x="0" y="0" width="15" height="14" rx="1" fill="#2b2b2b"/><text x="7.5" y="7" font-size="6.5" font-weight="bold" fill="#fff" text-anchor="middle" font-family="Liberation Sans">3G</text><path d="M4 9 L4 13 M11 9 L11 13" stroke="#ddd" stroke-width="1"/>
 <rect x="17" y="0" width="16" height="14" rx="1" fill="#2b2b2b"/><rect x="19" y="10" width="2" height="3" fill="#fff"/><rect x="22" y="8" width="2" height="5" fill="#fff"/><rect x="25" y="5" width="2" height="8" fill="#fff"/><rect x="28" y="2" width="2" height="11" fill="#ddd"/>
 <rect x="36" y="2" width="15" height="11" rx="2" fill="#1e1e1e"/><rect x="38" y="4" width="11" height="7" rx="1" fill="#6cc030"/><path d="M46 5 L41 7.5 L46 10" fill="none" stroke="#1e1e1e" stroke-width="1.5"/>
</svg>
<div class="a" style="left:1267px;top:57px;font-size:12px;font-weight:bold;line-height:15px;color:#111;white-space:nowrap">12:32<span style="font-size:7.5px"> AM</span></div>
<div class="a" style="left:1091px;top:73px;width:224px;height:19px;background:linear-gradient(180deg,#7a7a7a,#5a5a5a)"></div>
<div class="a" style="left:1095px;top:75px;font-size:9.5px;font-weight:bold;line-height:13px;color:#f4f4f4;white-space:nowrap">Screen1</div>
<div class="a emb" style="left:1093px;top:92px;width:52px;height:29px">test</div>
<div class="a emb" style="left:1149px;top:92px;width:52px;height:29px">values</div>
<div class="a emb" style="left:1205px;top:92px;width:52px;height:29px">Tags</div>
<div class="a emb" style="left:1261px;top:92px;width:52px;height:29px">clear DB</div>
<div class="a" style="left:1092px;top:126px;font-size:10.5px;line-height:13px;color:#222">input</div>
<div class="a" style="left:1118px;top:125px;width:196px;height:28px;background:linear-gradient(180deg,#dcdcdc,#efefef 40%,#f4f4f4);border:1px solid #c4c4c4;border-radius:3px;font-size:10px;line-height:24px;color:#999;padding-left:5px;white-space:nowrap">Hint for TextBox1</div>
<div class="a" style="left:1091px;top:160px;width:224px;text-align:center;font-size:10px;font-weight:bold;line-height:13px;color:#ee1111;padding-left:1px">show the result</div>
<div class="a" style="left:1091px;top:290px;width:224px;height:9px;background:linear-gradient(180deg,rgba(255,255,255,0),#c9c9c9 60%,#777)"></div>
<div class="a" style="left:1091px;top:298px;width:224px;height:94px;background:#fafafa"></div>
<div class="a" style="left:1202px;top:298px;width:1px;height:94px;background:#dedede"></div>
<div class="a" style="left:1091px;top:345px;width:224px;height:1px;background:#dedede"></div>
<svg class="a" style="left:1139px;top:307px" width="15" height="15" viewBox="0 0 15 15"><circle cx="7.5" cy="7.5" r="6" fill="#f4f4f4" stroke="#888" stroke-width="2"/><path d="M5.2 5.2 L9.8 9.8 M9.8 5.2 L5.2 9.8" stroke="#777" stroke-width="1.6"/></svg>
<svg class="a" style="left:1245px;top:302px" width="25" height="29" viewBox="120 85 520 615"><rect x="125" y="90" width="510" height="605" rx="25" fill="#eeedef" stroke="#888" stroke-width="14"/><rect x="132" y="95" width="496" height="120" fill="#8cc21c"/><rect x="190" y="160" width="320" height="30" fill="#c8e88a" opacity="0.8"/><path d="M290 690 Q280 600 320 560 L310 500 Q320 400 440 380 Q560 380 630 440 L630 690 Z" fill="#8dbb26"/><circle cx="360" cy="495" r="12" fill="#e8f2d0"/><circle cx="470" cy="435" r="12" fill="#e8f2d0"/><path d="M350 560 L610 450" stroke="#e8f2d0" stroke-width="10"/><path d="M330 600 L380 690" stroke="#e8f2d0" stroke-width="10"/></svg>
<svg class="a" style="left:1134px;top:348px" width="25" height="30" viewBox="120 85 520 615"><rect x="125" y="90" width="510" height="605" rx="25" fill="#eeedef" stroke="#888" stroke-width="14"/><rect x="132" y="95" width="496" height="120" fill="#8cc21c"/><rect x="190" y="160" width="320" height="30" fill="#c8e88a" opacity="0.8"/><path d="M290 690 Q280 600 320 560 L310 500 Q320 400 440 380 Q560 380 630 440 L630 690 Z" fill="#8dbb26"/><circle cx="360" cy="495" r="12" fill="#e8f2d0"/><circle cx="470" cy="435" r="12" fill="#e8f2d0"/><path d="M350 560 L610 450" stroke="#e8f2d0" stroke-width="10"/><path d="M330 600 L380 690" stroke="#e8f2d0" stroke-width="10"/></svg>
<svg class="a" style="left:1249px;top:355px" width="17" height="15" viewBox="0 0 17 15"><path d="M8.5 0.5 L16.5 14 L0.5 14 Z" fill="#111"/><rect x="7.6" y="4.5" width="1.8" height="5" fill="#fff"/><rect x="7.6" y="10.8" width="1.8" height="1.8" fill="#fff"/></svg>
<div class="a etx" style="left:1091px;top:333px;width:111px">Stop this application</div>
<div class="a etx" style="left:1203px;top:333px;width:112px">About this application</div>
<div class="a etx" style="left:1091px;top:380px;width:111px">Settings</div>
<div class="a etx" style="left:1203px;top:380px;width:112px">Send Error Report</div>
<!-- controls -->
<svg class="a" style="left:1071px;top:411px" width="263" height="150" viewBox="1071 411 263 150">
 <defs>
  <radialGradient id="kb" cx="0.5" cy="0.3" r="0.7"><stop offset="0" stop-color="#c4c4c4"/><stop offset="1" stop-color="#8a8a8a"/></radialGradient>
  <linearGradient id="kb2" x1="0" y1="0" x2="0" y2="1"><stop offset="0" stop-color="#b9b9b9"/><stop offset="1" stop-color="#8c8c8c"/></linearGradient>
 </defs>
 <g stroke="#5e5e5e" stroke-width="1" fill="url(#kb)">
  <circle cx="1137" cy="439" r="13.5"/><circle cx="1176" cy="439" r="13.5"/><circle cx="1215.5" cy="439" r="13.5"/><circle cx="1255" cy="439" r="13.5"/>
  <circle cx="1137" cy="489" r="13.5"/><circle cx="1255" cy="489" r="13.5"/>
  <circle cx="1137" cy="539" r="13.5"/><circle cx="1176" cy="539" r="13.5"/><circle cx="1215.5" cy="539" r="13.5"/><circle cx="1255" cy="539" r="13.5"/>
  <ellipse cx="1196" cy="489" rx="37" ry="26"/>
 </g>
 <clipPath id="dpc"><ellipse cx="1196" cy="489" rx="37" ry="26"/></clipPath>
 <path clip-path="url(#dpc)" d="M1170 460 L1222 460 L1205 481 L1187 481 Z M1170 518 L1222 518 L1205 497 L1187 497 Z" fill="#b3b3b3" stroke="#6a6a6a" stroke-width="0.8"/>
 <rect x="1176" y="481" width="40" height="16" rx="8" fill="url(#kb2)" stroke="#6a6a6a" stroke-width="0.8"/>
 <g fill="#333">
  <path d="M1192 473 L1196 469.5 L1200 473 Z"/><path d="M1192 505 L1196 508.5 L1200 505 Z"/>
  <path d="M1170 485 L1166.5 489 L1170 493 Z"/><path d="M1222 485 L1225.5 489 L1222 493 Z"/>
  <rect x="1130" y="435" width="14" height="9" rx="1"/><rect x="1134" y="433" width="5" height="3"/><circle cx="1137" cy="439.5" r="2.6" fill="#bbb"/>
  <path d="M1171 436.5 L1174 436.5 L1178 433 L1178 445 L1174 441.5 L1171 441.5 Z"/>
  <path d="M1208 436.5 L1211 436.5 L1215 433 L1215 445 L1211 441.5 L1208 441.5 Z"/>
 </g>
 <g fill="none" stroke="#333" stroke-width="1.4">
  <path d="M1180 436.5 Q1182 439 1180 441.5"/>
  <path d="M1217 436.5 Q1219 439 1217 441.5 M1219.5 434.5 Q1223 439 1219.5 443.5 M1222 432.5 Q1226.5 439 1222 445.5"/>
  <path d="M1251 435 A5.5 5.5 0 1 0 1259 435"/><path d="M1255 432 L1255 440"/>
  <path d="M1128.5 539.5 L1137 531 L1145.5 539.5 M1131.5 537 L1131.5 545.5 L1142.5 545.5 L1142.5 537"/>
  <path d="M1209.5 535 L1219 535 Q1223 535 1223 539.5 Q1223 544 1219 544 L1211 544"/><path d="M1212 531.5 L1208.5 535 L1212 538.5"/>
  <circle cx="1253" cy="537" r="4.5" stroke-width="1.8"/><path d="M1256 540 L1260.5 544.5" stroke-width="2.2"/>
 </g>
 <text x="1176" y="542.5" font-size="7.5" font-weight="bold" text-anchor="middle" fill="#333" font-family="Liberation Sans">MENU</text>
 <path d="M1131 496 Q1130 490 1136 483 Q1141 479 1144 481 L1141.5 484.5 Q1138 484 1135.5 488 Q1133.5 492 1135 494 Z" fill="#1a7a2a"/>
 <path d="M1245 492 Q1245 486 1255 486 Q1265 486 1265 492 L1261 492 L1260 489.5 Q1255 488.5 1250 489.5 L1249 492 Z" fill="#cc1111"/>
</svg>
<!-- TASKBAR -->
<div class="a" style="left:0;top:728px;width:1366px;height:40px;background:linear-gradient(90deg,#8597ae 0,#8a9db4 62px,#a0b8d3 82px,#a6bfdb 130px,#a6bfdb 820px,#9db4cf 1000px,#8b9fb8 1140px,#8699b3 1366px);border-top:1px solid #c9d6e6"></div>
<div class="a" style="left:0;top:729px;width:1366px;height:18px;background:linear-gradient(180deg,rgba(255,255,255,0.08),rgba(255,255,255,0))"></div>
<!-- start orb -->
<svg class="a" style="left:8px;top:729px" width="38" height="38" viewBox="0 0 38 38">
 <defs><linearGradient id="orb" x1="0" y1="0" x2="0" y2="1"><stop offset="0" stop-color="#b8c8d8"/><stop offset="0.45" stop-color="#4a78a8"/><stop offset="0.5" stop-color="#0e4a8a"/><stop offset="0.85" stop-color="#1a6ab8"/><stop offset="1" stop-color="#10c8f8"/></linearGradient></defs>
 <circle cx="19" cy="19.5" r="18" fill="url(#orb)" stroke="#0b3a6a" stroke-width="1"/>
 <path d="M10.5 12 Q14 10 18 11.5 L17 18.5 Q13.5 17 9.5 18.5 Z" fill="#f05a1a"/>
 <path d="M20 12.5 Q24 14 28.5 12 L27.5 19 Q23.5 20.5 19 19 Z" fill="#8cc040"/>
 <path d="M9 20.5 Q13 19 16.5 20.5 L15.5 27.5 Q12 26 8 27.5 Z" fill="#2a9ae8"/>
 <path d="M18.5 21 Q22.5 22.5 27 21 L26 28 Q22 29.5 17.5 28 Z" fill="#fcc020"/>
</svg>
<!-- taskbar button frames -->
<div class="a tbtn" style="left:122px;top:729px;width:58px;height:38px"></div>
<div class="a tbtn" style="left:245px;top:729px;width:59px;height:38px"></div>
<div class="a tbtn" style="left:308px;top:729px;width:59px;height:38px"></div>
<div class="a tbtn" style="left:370px;top:729px;width:58px;height:38px"></div>
<div class="a tbtn" style="left:431px;top:729px;width:54px;height:38px"></div>
<div class="a tbtn" style="left:494px;top:729px;width:58px;height:38px"></div>
<!-- explorer -->
<svg class="a" style="left:73px;top:734px" width="33" height="31" viewBox="0 0 33 31"><path d="M1 3 L10 3 L11 5 L31 5 L31 30 L1 30 Z" fill="#e9cf78" stroke="#c8a050" stroke-width="0.8"/><rect x="3" y="2" width="8" height="3" fill="#fff"/><rect x="4" y="2" width="3" height="2" fill="#20b020"/><rect x="12" y="4" width="9" height="3" fill="#fff"/><rect x="12" y="4" width="3" height="2" fill="#e02020"/><rect x="19" y="6" width="9" height="3" fill="#fff"/><rect x="19" y="6" width="3" height="2" fill="#2090e0"/><path d="M1 8 L31 8 L31 30 L1 30 Z" fill="#f8e4a0" stroke="#d0a850" stroke-width="0.8"/><path d="M4 31 L4 20 Q4 16 8 16 L24 16 Q28 16 28 20 L28 31 L23 31 L23 21 L9 21 L9 31 Z" fill="#8cd0f4" stroke="#3a98d8" stroke-width="0.8"/></svg>
<!-- firefox -->
<svg class="a" style="left:134px;top:732px" width="32" height="32" viewBox="0 0 32 32"><defs><radialGradient id="ffg" cx="0.6" cy="0.4" r="0.6"><stop offset="0" stop-color="#4aa8e8"/><stop offset="1" stop-color="#1a3a8a"/></radialGradient></defs><circle cx="17" cy="15" r="13" fill="url(#ffg)"/><path d="M5 7 Q7 4 9 5 Q8 8 11 9 Q14 7 17 9 Q13 11 13 16 Q14 22 20 23 Q27 23 29 15 Q30 11 28 7 Q32 11 31 18 Q29 28 18 30 Q6 30 3 20 Q2 12 5 7 Z" fill="#e8661e"/><path d="M6 22 Q10 29 18 29.5 Q26 29 30 20 Q27 27 19 27 Q10 27 6 22 Z" fill="#f6a623"/><path d="M27 6 Q31 10 30 16 Q29 10 25 7 Z" fill="#f6c040"/></svg>
<!-- IE -->
<svg class="a" style="left:197px;top:732px" width="34" height="34" viewBox="0 0 34 34"><defs><linearGradient id="ieg" x1="0" y1="0" x2="0" y2="1"><stop offset="0" stop-color="#6cc8f4"/><stop offset="1" stop-color="#0a5ab8"/></linearGradient></defs><path d="M28 18 L11 18 Q11.5 24 18 24.5 Q23 24.5 26 21.5 L27 25.5 Q23 29 17 29 Q6 28.5 6 17 Q6.5 6 17.5 5.5 Q28.5 6 28 18 Z M11 14.5 L23 14.5 Q22.5 9.5 17 9.5 Q11.5 9.5 11 14.5 Z" fill="url(#ieg)" stroke="#0a3a7a" stroke-width="0.6"/><path d="M3 30 Q0 25 8 15 Q18 3 28 2 Q33 2 31 6 Q29 3 22 6 Q12 11 6 22 Q3 28 7 29 Z" fill="#f2c230" stroke="#c08a10" stroke-width="0.5"/></svg>
<!-- chrome -->
<svg class="a" style="left:259px;top:733px" width="32" height="32" viewBox="0 0 32 32"><path d="M16 16 L3.44 8.75 A14.5 14.5 0 0 1 28.56 8.75 Z" fill="#db4437"/><path d="M16 16 L28.56 8.75 A14.5 14.5 0 0 1 16 30.5 Z" fill="#f4c20d"/><path d="M16 16 L16 30.5 A14.5 14.5 0 0 1 3.44 8.75 Z" fill="#0f9d58"/><circle cx="16" cy="16" r="6.8" fill="#fff"/><circle cx="16" cy="16" r="5.2" fill="#4a86e8"/></svg>
<!-- android puzzle (app inventor) -->
<svg class="a" style="left:321px;top:732px" width="32" height="32" viewBox="0 0 32 32"><path d="M2 2 L10 2 Q10 5 13 5 Q16 5 16 2 L29 2 Q31 2 31 4 L31 28 L2 28 L2 12 Q5 12 5 9 Q5 6 2 6 Z" fill="#8c8c8c"/><path d="M3 32 Q3 20 16 20 Q29 20 29 32 Z" fill="#7ea33a"/><path d="M8 21 L6 17 M24 21 L26 17" stroke="#7ea33a" stroke-width="1.5"/><circle cx="11" cy="26" r="1.4" fill="#fff"/><circle cx="21" cy="26" r="1.4" fill="#fff"/></svg>
<!-- terminal -->
<svg class="a" style="left:383px;top:734px" width="32" height="30" viewBox="0 0 32 30"><rect x="1" y="1" width="29" height="21" fill="#1a1a1a" stroke="#b0b0b0" stroke-width="1.2"/><path d="M4 5 L7 7 L4 9" stroke="#fff" fill="none" stroke-width="1"/><rect x="8" y="9" width="1.5" height="1" fill="#fff"/><path d="M10 20 L18 12 L22 16 L14 24 Z" fill="#e04a20"/><path d="M18 12 L24 6 L28 10 L22 16 Z" fill="#3a88e0"/><path d="M14 24 L22 16 L26 20 L18 28 Z" fill="#4ab030"/><path d="M22 16 L28 10 L31 13 L26 20 Z" fill="#2a9a50"/></svg>
<!-- android -->
<svg class="a" style="left:443px;top:732px" width="30" height="33" viewBox="0 0 30 33"><g stroke="#fff" stroke-width="3" stroke-linejoin="round"><path d="M7 12 Q7 4 15 4 Q23 4 23 12 Z" fill="#fff"/><rect x="7" y="13" width="16" height="12" fill="#fff"/><rect x="2" y="13" width="4" height="10" fill="#fff"/><rect x="24" y="13" width="4" height="10" fill="#fff"/><rect x="10" y="24" width="4" height="7" fill="#fff"/><rect x="16" y="24" width="4" height="7" fill="#fff"/></g><path d="M7 12 Q7 4 15 4 Q23 4 23 12 Z" fill="#8dc21f"/><path d="M10 5 L8 2 M20 5 L22 2" stroke="#8dc21f" stroke-width="1"/><rect x="7" y="13" width="16" height="12" rx="1.5" fill="#8dc21f"/><rect x="2.5" y="13" width="3.5" height="10" rx="1.7" fill="#8dc21f"/><rect x="24" y="13" width="3.5" height="10" rx="1.7" fill="#8dc21f"/><rect x="10" y="24" width="3.5" height="7" rx="1.7" fill="#8dc21f"/><rect x="16.5" y="24" width="3.5" height="7" rx="1.7" fill="#8dc21f"/><circle cx="12" cy="8" r="1" fill="#fff"/><circle cx="18" cy="8" r="1" fill="#fff"/></svg>
<!-- remote desktop / keyboard -->
<svg class="a" style="left:506px;top:732px" width="34" height="34" viewBox="0 0 34 34"><path d="M8 3 L30 1 L30 22 L8 21 Z" fill="#1a3ac0" stroke="#ddd" stroke-width="1"/><path d="M10 5 L28 3.5 L28 19 L10 18 Z" fill="#4a8ae8"/><path d="M2 12 L20 10 L22 16 L4 19 Z" fill="#3a7ad8" stroke="#fff" stroke-width="0.8"/><path d="M5 13.5 L19 12 M5.5 15.5 L20 14" stroke="#fff" stroke-width="0.8"/><ellipse cx="21" cy="29" rx="6" ry="3" fill="#bbb"/><rect x="19" y="22" width="4" height="6" fill="#ccc"/></svg>
<!-- tray -->
<svg class="a" style="left:1152px;top:746px" width="10" height="7" viewBox="0 0 10 7"><path d="M1 6 L5 1 L9 6 Z" fill="#f4f6fa"/></svg>
<svg class="a" style="left:1173px;top:741px" width="18" height="17" viewBox="0 0 18 17"><rect x="1" y="1" width="1.5" height="15" fill="#eee"/><path d="M2.5 1.5 L12 1.5 L11 4 L14 5 L14 10 L2.5 10 Z" fill="#fff" stroke="#888" stroke-width="0.6"/><circle cx="12" cy="12" r="4.2" fill="#e02020"/><path d="M10.2 10.2 L13.8 13.8 M13.8 10.2 L10.2 13.8" stroke="#fff" stroke-width="1.3"/></svg>
<svg class="a" style="left:1197px;top:741px" width="17" height="17" viewBox="0 0 17 17"><rect x="1" y="2" width="9" height="14" rx="1" fill="#555" stroke="#bbb" stroke-width="0.8"/><path d="M9 6 L16 6 L16 10 Q16 12 12.5 12 L12.5 15 M11 6 L11 2 M14 6 L14 2" fill="#fff" stroke="#fff" stroke-width="1.2"/><path d="M2 10 L8 16 M8 10 L2 16" stroke="#e02020" stroke-width="1.8"/></svg>
<svg class="a" style="left:1222px;top:743px" width="16" height="13" viewBox="0 0 16 13"><g fill="#f4f4f4"><rect x="1" y="10" width="2" height="2.5"/><rect x="4" y="8" width="2" height="4.5"/><rect x="7" y="6" width="2" height="6.5"/><rect x="10" y="3.5" width="2" height="9"/><rect x="13" y="1" width="2" height="11.5"/></g></svg>
<svg class="a" style="left:1245px;top:741px" width="18" height="17" viewBox="0 0 18 17"><path d="M1 6 L4 6 L8 2 L8 14 L4 10 L1 10 Z" fill="#f0f0f0" stroke="#999" stroke-width="0.6"/><circle cx="12.5" cy="11.5" r="4.5" fill="#fff"/><circle cx="12.5" cy="11.5" r="3.8" fill="none" stroke="#e02020" stroke-width="1.6"/><path d="M10 9 L15 14" stroke="#e02020" stroke-width="1.6"/></svg>
<div class="a" style="left:1282px;top:732px;font-size:12px;line-height:15px;color:#f4f6fa;white-space:nowrap">上午 08:32</div>
<div class="a" style="left:1282px;top:751px;font-size:12.5px;line-height:15px;color:#f4f6fa;white-space:nowrap">2016/3/24</div>
<div class="a" style="left:1351px;top:729px;width:15px;height:39px;background:linear-gradient(90deg,#6a7a90,#8fa2b8 30%,#7b8ea6);border-left:1px solid #556"></div>
</body></html>
